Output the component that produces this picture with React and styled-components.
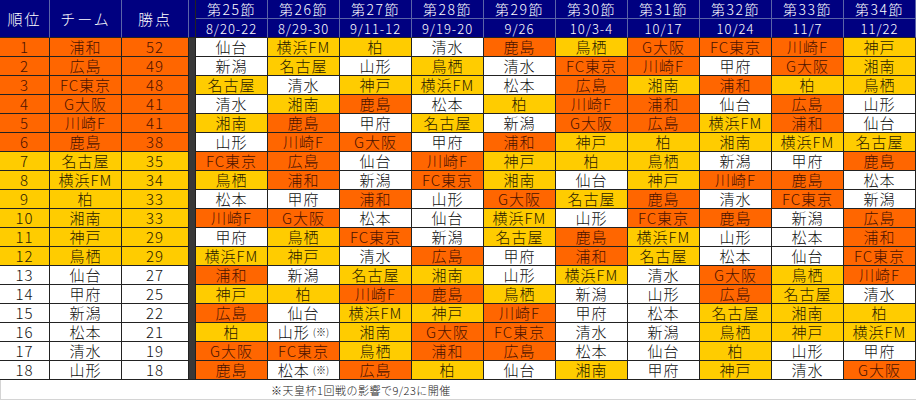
import React from 'react';
import styled, { createGlobalStyle, css } from 'styled-components';

const GlobalStyle = createGlobalStyle`
  html, body {
    margin: 0;
    padding: 0;
    background: #ffffff;
  }
  body {
    font-family: "Noto Sans CJK JP", "Noto Sans", sans-serif;
    font-weight: 300;
  }
`;

const TEAMS = [
  ['浦和', 52], ['広島', 49], ['FC東京', 48], ['G大阪', 41], ['川崎F', 41], ['鹿島', 38],
  ['名古屋', 35], ['横浜FM', 34], ['柏', 33], ['湘南', 33], ['神戸', 29], ['鳥栖', 29],
  ['仙台', 27], ['甲府', 25], ['新潟', 22], ['松本', 21], ['清水', 19], ['山形', 18],
];

const ROUNDS = [
  ['第25節', '8/20-22'], ['第26節', '8/29-30'], ['第27節', '9/11-12'], ['第28節', '9/19-20'],
  ['第29節', '9/26'], ['第30節', '10/3-4'], ['第31節', '10/17'], ['第32節', '10/24'],
  ['第33節', '11/7'], ['第34節', '11/22'],
];

// 残り試合の対戦相手 (※ = 天皇杯の影響で日程変更)
const FIXTURES = [
  ['仙台', '横浜FM', '柏', '清水', '鹿島', '鳥栖', 'G大阪', 'FC東京', '川崎F', '神戸'],
  ['新潟', '名古屋', '山形', '鳥栖', '清水', 'FC東京', '川崎F', '甲府', 'G大阪', '湘南'],
  ['名古屋', '清水', '神戸', '横浜FM', '松本', '広島', '湘南', '浦和', '柏', '鳥栖'],
  ['清水', '湘南', '鹿島', '松本', '柏', '川崎F', '浦和', '仙台', '広島', '山形'],
  ['湘南', '鹿島', '甲府', '名古屋', '新潟', 'G大阪', '広島', '横浜FM', '浦和', '仙台'],
  ['山形', '川崎F', 'G大阪', '甲府', '浦和', '神戸', '柏', '湘南', '横浜FM', '名古屋'],
  ['FC東京', '広島', '仙台', '川崎F', '神戸', '柏', '鳥栖', '新潟', '甲府', '鹿島'],
  ['鳥栖', '浦和', '新潟', 'FC東京', '湘南', '仙台', '神戸', '川崎F', '鹿島', '松本'],
  ['松本', '甲府', '浦和', '山形', 'G大阪', '名古屋', '鹿島', '清水', 'FC東京', '新潟'],
  ['川崎F', 'G大阪', '松本', '仙台', '横浜FM', '山形', 'FC東京', '鹿島', '新潟', '広島'],
  ['甲府', '鳥栖', 'FC東京', '新潟', '名古屋', '鹿島', '横浜FM', '山形', '松本', '浦和'],
  ['横浜FM', '神戸', '清水', '広島', '甲府', '浦和', '名古屋', '松本', '仙台', 'FC東京'],
  ['浦和', '新潟', '名古屋', '湘南', '山形', '横浜FM', '清水', 'G大阪', '鳥栖', '川崎F'],
  ['神戸', '柏', '川崎F', '鹿島', '鳥栖', '新潟', '山形', '広島', '名古屋', '清水'],
  ['広島', '仙台', '横浜FM', '神戸', '川崎F', '甲府', '松本', '名古屋', '湘南', '柏'],
  ['柏', '山形※', '湘南', 'G大阪', 'FC東京', '清水', '新潟', '鳥栖', '神戸', '横浜FM'],
  ['G大阪', 'FC東京', '鳥栖', '浦和', '広島', '松本', '仙台', '柏', '山形', '甲府'],
  ['鹿島', '松本※', '広島', '柏', '仙台', '湘南', '甲府', '神戸', '清水', 'G大阪'],
];

const rankOf = Object.fromEntries(TEAMS.map(([name], i) => [name, i + 1]));
const tierOf = (rank) => (rank <= 6 ? 'top' : rank <= 12 ? 'mid' : 'low');

const tierColors = {
  top: { bg: '#ff6600', fg: '#4a1200' },
  mid: { bg: '#ffcc00', fg: '#2a1a00' },
  low: { bg: '#ffffff', fg: '#111111' },
};

const Sheet = styled.div`
  width: 916px;
  background: #ffffff;
`;

const Grid = styled.div`
  display: grid;
  grid-template-columns: 50px 72px 67px 7px repeat(10, 72px);
  grid-template-rows: repeat(20, 19px);
`;

const HeadCell = styled.div`
  box-sizing: border-box;
  background: #000080;
  color: #ffffff;
  display: flex;
  align-items: center;
  justify-content: center;
  white-space: nowrap;
  line-height: 17px;
  border-right: 1px solid #5a64a8;
  border-bottom: 1px solid ${(p) => (p.$last ? '#222' : '#5a64a8')};
  font-size: ${(p) => (p.$small ? '13px' : '14px')};
  letter-spacing: ${(p) => (p.$small ? '1px' : '1.5px')};
  ${(p) =>
    p.$tall &&
    css`
      grid-row: span 2;
      border-bottom-color: #222;
      font-size: 15px;
      letter-spacing: 2px;
    `}
`;

const Gutter = styled.div`
  box-sizing: border-box;
  background: ${(p) => (p.$head ? '#000080' : '#383838')};
  grid-row: span ${(p) => p.$rows};
  border-bottom: 1px solid #222;
  border-right: 1px solid #222;
`;

const Cell = styled.div`
  box-sizing: border-box;
  display: flex;
  align-items: center;
  justify-content: center;
  white-space: nowrap;
  background: ${(p) => tierColors[p.$tier].bg};
  color: ${(p) => tierColors[p.$tier].fg};
  border-right: 1px solid #222;
  border-bottom: 1px solid #222;
  font-size: 15px;
  line-height: 18px;
  letter-spacing: 1px;
`;

const Note = styled.span`
  font-size: 10px;
  letter-spacing: 0;
  margin-left: 3px;
`;

const Footer = styled.div`
  box-sizing: border-box;
  height: 20px;
  padding-left: 270px;
  border-left: 1px solid #d4d4d4;
  border-bottom: 1px solid #d4d4d4;
  font-size: 11px;
  line-height: 20px;
  color: #222;
  letter-spacing: 0.5px;
`;

const Opponent = ({ name }) => {
  const marked = name.endsWith('※');
  const team = marked ? name.slice(0, -1) : name;
  return (
    <Cell $tier={tierOf(rankOf[team])}>
      {team}
      {marked && <Note>(※)</Note>}
    </Cell>
  );
};

export default function App() {
  return (
    <Sheet>
      <GlobalStyle />
      <Grid>
        <HeadCell $tall>順位</HeadCell>
        <HeadCell $tall>チーム</HeadCell>
        <HeadCell $tall>勝点</HeadCell>
        <Gutter $head $rows={2} />
        {ROUNDS.map(([round]) => (
          <HeadCell key={round}>{round}</HeadCell>
        ))}
        {ROUNDS.map(([round, date]) => (
          <HeadCell key={round + date} $small $last>
            {date}
          </HeadCell>
        ))}

        {TEAMS.map(([name, pts], i) => {
          const tier = tierOf(i + 1);
          return (
            <React.Fragment key={name}>
              <Cell $tier={tier}>{i + 1}</Cell>
              <Cell $tier={tier}>{name}</Cell>
              <Cell $tier={tier}>{pts}</Cell>
              {i === 0 && <Gutter $rows={18} />}
              {FIXTURES[i].map((opp, j) => (
                <Opponent key={j} name={opp} />
              ))}
            </React.Fragment>
          );
        })}
      </Grid>
      <Footer>※天皇杯1回戦の影響で9/23に開催</Footer>
    </Sheet>
  );
}
